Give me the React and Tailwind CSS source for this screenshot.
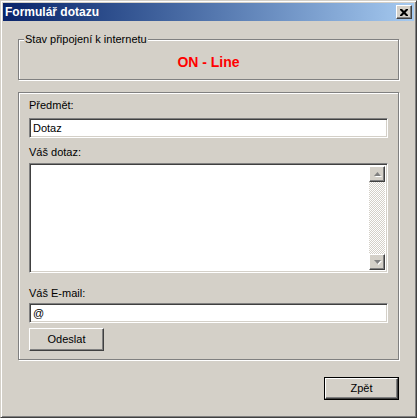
import React from "react";

const raised =
  "border border-t-white border-l-white border-r-[#404040] border-b-[#404040] shadow-[inset_-1px_-1px_0_#808080]";
const sunken =
  "border border-t-[#808080] border-l-[#808080] border-r-white border-b-white shadow-[inset_1px_1px_0_#404040,inset_-1px_-1px_0_#d4d0c8]";
const etched =
  "border border-[#808080] shadow-[inset_1px_1px_0_#fff,1px_1px_0_#fff]";

function ScrollBtn({ down }) {
  return (
    <div className={`w-[16px] h-[16px] bg-[#d4d0c8] ${raised} flex items-center justify-center`}>
      <svg width="7" height="5" viewBox="0 0 7 5" className="overflow-visible">
        {down ? (
          <>
            <path d="M1 1h7l-3.5 4z" fill="#fff" />
            <path d="M0 0h7l-3.5 4z" fill="#808080" />
          </>
        ) : (
          <>
            <path d="M1 5h7l-3.5-4z" fill="#fff" />
            <path d="M0 4h7l-3.5-4z" fill="#808080" />
          </>
        )}
      </svg>
    </div>
  );
}

export default function App() {
  const font = { fontFamily: '"Liberation Sans", Arial, sans-serif' };
  return (
    <div
      style={font}
      className="w-[417px] h-[418px] bg-[#d4d0c8] border border-t-[#d4d0c8] border-l-[#d4d0c8] border-r-[#404040] border-b-[#404040] shadow-[inset_1px_1px_0_#fff,inset_-1px_-1px_0_#808080] p-[2px] flex flex-col text-[11px] leading-[13px] text-black"
    >
      <div className="h-[18px] shrink-0 flex items-center justify-between pl-[2px] pr-[2px] bg-linear-to-r from-[#0a246a] to-[#a6caf0]">
        <span className="text-white font-bold text-[12px] leading-[14px]">Formulář dotazu</span>
        <div className={`w-[16px] h-[14px] bg-[#d4d0c8] ${raised} flex items-center justify-center`}>
          <svg width="8" height="7" viewBox="0 0 8 7">
            <path d="M0 0h2l2 2 2-2h2v1l-2.5 2.5L8 6v1H6L4 5 2 7H0V6l2.5-2.5L0 1z" fill="#000" />
          </svg>
        </div>
      </div>

      <div className="flex-1 flex flex-col px-[15px]">
        <div className={`relative mt-[18px] h-[41px] ${etched} flex justify-center pt-[14px]`}>
          <span className="absolute left-[5px] top-[-7px] bg-[#d4d0c8] px-[1px]">
            Stav připojení k internetu
          </span>
          <span className="text-[#ff0000] font-bold text-[14px] leading-[16px]">ON - Line</span>
        </div>

        <div className={`mt-[12px] h-[268px] ${etched} flex flex-col px-[10px] pt-[6px]`}>
          <span>Předmět:</span>
          <div className={`mt-[6px] h-[20px] bg-white ${sunken} px-[3px] flex items-center`}>
            <span className="text-[11px]">Dotaz</span>
          </div>
          <span className="mt-[8px]">Váš dotaz:</span>
          <div className={`mt-[4px] h-[110px] bg-white ${sunken} flex justify-end p-[2px]`}>
            <div className="w-[16px] h-full flex flex-col">
              <ScrollBtn />
              <div className="flex-1 bg-[repeating-conic-gradient(#fff_0%_25%,#d4d0c8_0%_50%)] bg-[length:2px_2px]" />
              <ScrollBtn down />
            </div>
          </div>
          <span className="mt-[14px]">Váš E-mail:</span>
          <div className={`mt-[3px] h-[20px] bg-white ${sunken} px-[3px] flex items-center`}>
            <span className="text-[11px]">@</span>
          </div>
          <div className="mt-[5px]">
            <button className={`w-[75px] h-[23px] bg-[#d4d0c8] ${raised} text-[11px] leading-[13px]`} style={font}>
              Odeslat
            </button>
          </div>
        </div>

        <div className="mt-[17px] flex justify-end">
          <div className="border border-black">
            <button className={`w-[73px] h-[21px] bg-[#d4d0c8] ${raised} text-[11px] leading-[13px] block`} style={font}>
              Zpět
            </button>
          </div>
        </div>
      </div>
    </div>
  );
}
